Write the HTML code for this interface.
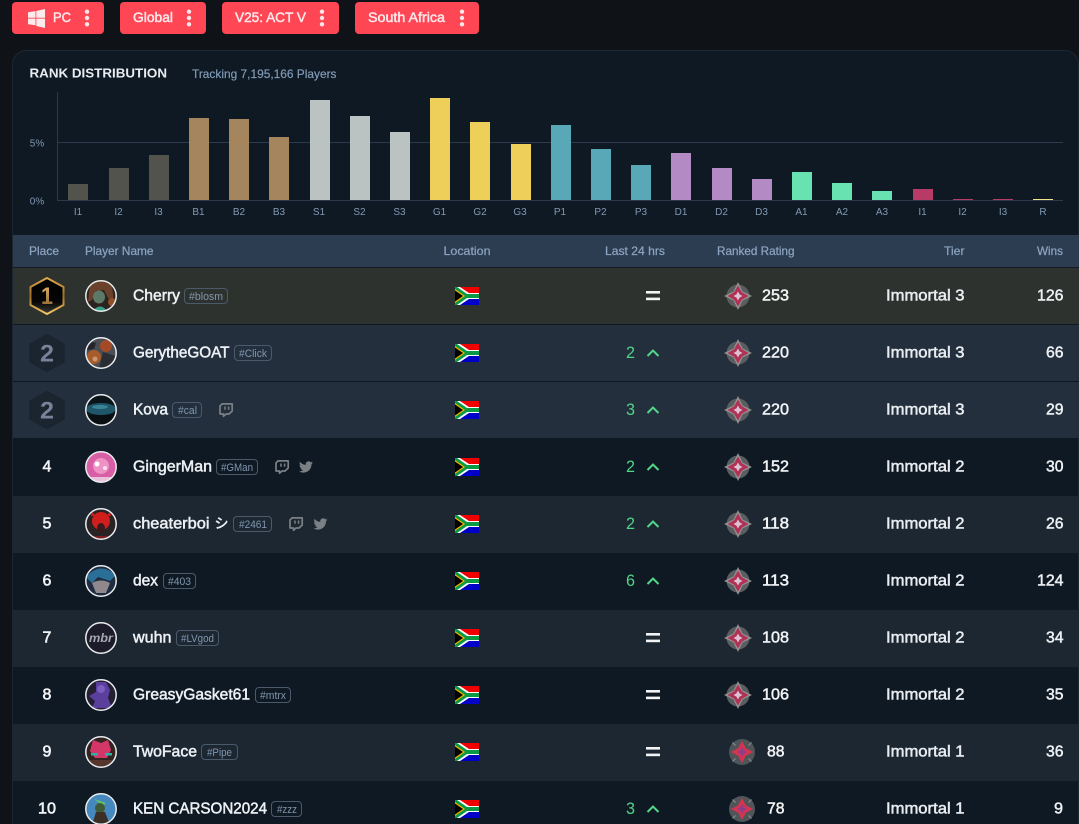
<!DOCTYPE html>
<html><head><meta charset="utf-8"><title>Rank Distribution</title>
<style>
html,body{margin:0;padding:0;background:#0f1318;overflow:hidden}
svg{display:block}
text{font-family:"Liberation Sans","Noto Sans CJK JP",sans-serif}
.btn{font-size:14px;fill:#fde6e8;stroke:#fde6e8;stroke-width:.5}
.ax{font-size:10px;fill:#8199b3;text-anchor:middle}
.hd{font-size:12px;fill:#8ba3be;stroke:#8ba3be;stroke-width:.25}
.nm{font-size:16px;fill:#edf1f5;stroke:#edf1f5;stroke-width:.5;transform:translateY(-.6px)}
.tg{font-size:11px;fill:#8096ae}
.tb{fill:none;stroke:#4b5a6b;stroke-width:1}
.pl{font-size:16px;fill:#f2f4f6;stroke:#f2f4f6;stroke-width:.6;text-anchor:middle;transform:translateY(-.6px)}
.rt{font-size:16px;fill:#f2f4f6;stroke:#f2f4f6;stroke-width:.5;transform:translateY(-.6px)}
.tr{font-size:16px;fill:#e9edf1;stroke:#e9edf1;stroke-width:.5;transform:translateY(-.6px)}
.wn{font-size:16px;fill:#edf0f3;stroke:#edf0f3;stroke-width:.5;transform:translateY(-.6px)}
.ch{font-size:17px;fill:#4fd586;transform:translateY(-.6px)}
</style></head><body>
<svg width="1079" height="824" viewBox="0 0 1079 824" xmlns="http://www.w3.org/2000/svg">
<defs>
<linearGradient id="gold" x1="0" y1="0" x2="0" y2="1"><stop offset="0" stop-color="#e0aa50"/><stop offset=".5" stop-color="#9a6c26"/><stop offset="1" stop-color="#f4c766"/></linearGradient>
<linearGradient id="gnum" x1="0" y1="0" x2="0" y2="1"><stop offset="0" stop-color="#edb868"/><stop offset="1" stop-color="#85602a"/></linearGradient>
<linearGradient id="hexf" x1="0" y1="0" x2="0" y2="1"><stop offset="0" stop-color="#000"/><stop offset=".66" stop-color="#060606"/><stop offset="1" stop-color="#3c3c38"/></linearGradient>
<clipPath id="c"><circle cx="101" cy="0" r="15"/></clipPath>
<g id="flag">
<rect x="455" y="-9" width="24" height="9" fill="#f00000"/>
<rect x="455" y="0" width="24" height="9" fill="#0000c8"/>
<path d="M455-9H460L469-3H479V3H469L460 9H455Z" fill="#fff"/>
<path d="M455-9H457L467-2H479V2H467L457 9H455Z" fill="#0a9a45"/>
<path d="M455-7L465 0 455 7Z" fill="#f5b400"/>
<path d="M455-5.500L463 0 455 5.500Z" fill="#000"/>
</g>
<g id="imm3">
<circle cx="738" cy="0" r="11.500" fill="#5a5e60"/>
<path d="M738-14L742.500-4.500 752 0 742.500 4.500 738 14 733.500 4.500 724 0 733.500-4.500Z" fill="#929391"/>
<path d="M738-10.500L741.800-3.800 748.500 0 741.800 3.800 738 10.500 734.200 3.800 727.500 0 734.200-3.800Z" fill="#b03056"/>
<path d="M738-4.500L739.600-1.600 742.500 0 739.600 1.600 738 4.500 736.400 1.600 733.500 0 736.400-1.600Z" fill="#dcc2d2"/>
</g>
<g id="imm1">
<circle cx="742" cy="0" r="13" fill="#4f5559"/>
<path d="M735.500-6.500l-3-3M748.500-6.500l3-3M735.500 6.500l-3 3M748.500 6.500l3 3" stroke="#8f9393" stroke-width="1"/>
<path d="M742-11L745.800-3.800 753 0 745.800 3.800 742 11 738.200 3.800 731 0 738.200-3.800Z" fill="#d6334f"/>
<path d="M742-5L743.800-1.800 747 0 743.800 1.800 742 5 740.200 1.800 737 0 740.200-1.800Z" fill="#8e3d8c"/>
</g>
<g id="up"><path d="M647.500 3l5.500-5.500 5.500 5.500" fill="none" stroke="#52d68a" stroke-width="2"/></g>
<g id="eq"><rect x="646" y="-5" width="14" height="2.600" fill="#f1f3f5"/><rect x="646" y="1.600" width="14" height="2.600" fill="#f1f3f5"/></g>
<g id="tw" fill="none" stroke="#7b8085" stroke-linejoin="round">
<path d="M3 .9H13.200V8L10 11H7L4.500 13.200V11H1V3Z" stroke-width="1.700"/>
<path d="M6 3.500V6.800M9.600 3.500V6.800" stroke-width="1.500"/>
</g>
<path id="tt" d="M23.953 4.57a10 10 0 01-2.825.775 4.958 4.958 0 002.163-2.723c-.951.555-2.005.959-3.127 1.184a4.92 4.92 0 00-8.384 4.482C7.69 8.095 4.067 6.13 1.64 3.162a4.822 4.822 0 00-.666 2.475c0 1.71.87 3.213 2.188 4.096a4.904 4.904 0 01-2.228-.616v.06a4.923 4.923 0 003.946 4.827 4.996 4.996 0 01-2.212.085 4.936 4.936 0 004.604 3.417 9.867 9.867 0 01-6.102 2.105c-.39 0-.779-.023-1.17-.067a13.995 13.995 0 007.557 2.209c9.053 0 13.998-7.496 13.998-13.985 0-.21 0-.42-.015-.63A9.935 9.935 0 0024 4.59z" fill="#7b8085"/>
<circle id="ring" cx="101" cy="0" r="15.200" fill="none" stroke="#e9ecee" stroke-width="1.500"/>
</defs>

<rect width="1079" height="824" fill="#0f1318"/>

<!-- filter buttons -->
<rect x="12" y="2" width="92" height="32" rx="4" fill="#ff4655"/>
<rect x="120" y="2" width="86" height="32" rx="4" fill="#ff4655"/>
<rect x="222" y="2" width="117" height="32" rx="4" fill="#ff4655"/>
<rect x="355" y="2" width="124" height="32" rx="4" fill="#ff4655"/>
<path d="M28 12.200l7.500-1.100v6.700H28zM36.300 11l8.700-2v8.800h-8.700zM28 18.600h7.500v6.700L28 24.200zM36.300 18.600H45V28l-8.700-2z" fill="#fdeaec"/>
<text class="btn" x="53" y="22" textLength="18" lengthAdjust="spacingAndGlyphs">PC</text>
<text class="btn" x="133" y="22" textLength="40" lengthAdjust="spacingAndGlyphs">Global</text>
<text class="btn" x="235" y="22" textLength="71" lengthAdjust="spacingAndGlyphs">V25: ACT V</text>
<text class="btn" x="368" y="22" textLength="77" lengthAdjust="spacingAndGlyphs">South Africa</text>
<g fill="#fde6e8">
<circle cx="87" cy="11.700" r="2.200"/><circle cx="87" cy="18" r="2.200"/><circle cx="87" cy="24.300" r="2.200"/>
<circle cx="189" cy="11.700" r="2.200"/><circle cx="189" cy="18" r="2.200"/><circle cx="189" cy="24.300" r="2.200"/>
<circle cx="322" cy="11.700" r="2.200"/><circle cx="322" cy="18" r="2.200"/><circle cx="322" cy="24.300" r="2.200"/>
<circle cx="462" cy="11.700" r="2.200"/><circle cx="462" cy="18" r="2.200"/><circle cx="462" cy="24.300" r="2.200"/>
</g>

<!-- card -->
<rect x="12.500" y="50.500" width="1066" height="800" rx="14" fill="#0f1923" stroke="#1c2733" stroke-width="1"/>
<text x="29.500" y="77.500" font-size="13" font-weight="700" fill="#e9edf1" textLength="137.500" lengthAdjust="spacingAndGlyphs">RANK DISTRIBUTION</text>
<text x="192" y="78" font-size="12" fill="#7f9ab6" stroke="#7f9ab6" stroke-width=".2" textLength="144.500" lengthAdjust="spacingAndGlyphs">Tracking 7,195,166 Players</text>

<!-- chart -->
<path d="M57.500 92V200.500H1063M57.500 142.500H1063" fill="none" stroke="#2b394a" stroke-width="1"/>
<text class="ax" x="37" y="146.500">5%</text>
<text class="ax" x="37" y="204.500">0%</text>
<g fill="#52534d">
<rect x="68" y="184" width="20" height="16"/><rect x="109" y="168" width="20" height="32"/><rect x="149" y="155" width="20" height="45"/>
</g>
<g fill="#a5855e">
<rect x="189" y="118" width="20" height="82"/><rect x="229" y="119" width="20" height="81"/><rect x="269" y="137" width="20" height="63"/>
</g>
<g fill="#bbc3c2">
<rect x="310" y="100" width="20" height="100"/><rect x="350" y="116" width="20" height="84"/><rect x="390" y="132" width="20" height="68"/>
</g>
<g fill="#edcf5a">
<rect x="430" y="98" width="20" height="102"/><rect x="470" y="122" width="20" height="78"/><rect x="511" y="144" width="20" height="56"/>
</g>
<g fill="#58a8b7">
<rect x="551" y="125" width="20" height="75"/><rect x="591" y="149" width="20" height="51"/><rect x="631" y="165" width="20" height="35"/>
</g>
<g fill="#b48ac4">
<rect x="671" y="153" width="20" height="47"/><rect x="712" y="168" width="20" height="32"/><rect x="752" y="179" width="20" height="21"/>
</g>
<g fill="#67e2b0">
<rect x="792" y="172" width="20" height="28"/><rect x="832" y="183" width="20" height="17"/><rect x="872" y="191" width="20" height="9"/>
</g>
<g fill="#b83a66">
<rect x="913" y="189" width="20" height="11"/><rect x="953" y="199" width="20" height="1"/><rect x="993" y="199" width="20" height="1"/>
</g>
<rect x="1033" y="199" width="20" height="1" fill="#f1e58a"/>
<g>
<text class="ax" x="78" y="215">I1</text><text class="ax" x="118.500" y="215">I2</text><text class="ax" x="158.500" y="215">I3</text>
<text class="ax" x="198.500" y="215">B1</text><text class="ax" x="239" y="215">B2</text><text class="ax" x="279" y="215">B3</text>
<text class="ax" x="319" y="215">S1</text><text class="ax" x="359.500" y="215">S2</text><text class="ax" x="399.500" y="215">S3</text>
<text class="ax" x="439.500" y="215">G1</text><text class="ax" x="480" y="215">G2</text><text class="ax" x="520" y="215">G3</text>
<text class="ax" x="560" y="215">P1</text><text class="ax" x="600.500" y="215">P2</text><text class="ax" x="641" y="215">P3</text>
<text class="ax" x="681" y="215">D1</text><text class="ax" x="721.500" y="215">D2</text><text class="ax" x="761.500" y="215">D3</text>
<text class="ax" x="801.500" y="215">A1</text><text class="ax" x="842" y="215">A2</text><text class="ax" x="882" y="215">A3</text>
<text class="ax" x="922.500" y="215">I1</text><text class="ax" x="962.500" y="215">I2</text><text class="ax" x="1003" y="215">I3</text>
<text class="ax" x="1043" y="215">R</text>
</g>

<!-- table header -->
<rect x="13" y="235" width="1066" height="32" fill="#2c3d52"/>
<text class="hd" x="29" y="255" textLength="30" lengthAdjust="spacingAndGlyphs">Place</text>
<text class="hd" x="85" y="255" textLength="68.500" lengthAdjust="spacingAndGlyphs">Player Name</text>
<text class="hd" x="443.500" y="255" textLength="47" lengthAdjust="spacingAndGlyphs">Location</text>
<text class="hd" x="605" y="255" textLength="60" lengthAdjust="spacingAndGlyphs">Last 24 hrs</text>
<text class="hd" x="717" y="255" textLength="77.500" lengthAdjust="spacingAndGlyphs">Ranked Rating</text>
<text class="hd" x="944" y="255" textLength="20.500" lengthAdjust="spacingAndGlyphs">Tier</text>
<text class="hd" x="1037" y="255" textLength="26" lengthAdjust="spacingAndGlyphs">Wins</text>

<!-- row backgrounds -->
<rect x="13" y="267" width="1066" height="1" fill="#141b23"/>
<rect x="13" y="268" width="1066" height="56" fill="#2e322e"/>
<rect x="13" y="324" width="1066" height="1" fill="#11171e"/>
<rect x="13" y="325" width="1066" height="56" fill="#232f3d"/>
<rect x="13" y="381" width="1066" height="1" fill="#11171e"/>
<rect x="13" y="382" width="1066" height="56" fill="#232f3d"/>
<rect x="13" y="496" width="1066" height="57" fill="#1c2732"/>
<rect x="13" y="610" width="1066" height="57" fill="#1c2732"/>
<rect x="13" y="724" width="1066" height="57" fill="#1c2732"/>

<!-- Row 1 -->
<g transform="translate(0,296)">
<path d="M47-18L63.500-9V9L47 18 30.500 9V-9z" fill="url(#hexf)" stroke="url(#gold)" stroke-width="2" stroke-linejoin="round"/>
<text x="47" y="8" font-size="24" font-weight="700" fill="url(#gnum)" text-anchor="middle" textLength="12" lengthAdjust="spacingAndGlyphs">1</text>
<g clip-path="url(#c)"><rect x="85" y="-16" width="32" height="32" fill="#2c2220"/><path d="M90-12Q101-20 112-10L114 6 108 2 104-6 96-5 92 4 88 6z" fill="#6a412b"/><ellipse cx="99" cy="1" rx="6" ry="6.500" fill="#5d7a68"/><path d="M92 16Q100 5 108 16z" fill="#37a088"/><circle cx="112" cy="6" r="4" fill="#8f5026"/></g>
<use href="#ring"/>
<text class="nm" x="133" y="5" textLength="47" lengthAdjust="spacingAndGlyphs">Cherry</text>
<rect class="tb" x="184.500" y="-7.500" width="43" height="15" rx="3.500"/>
<text class="tg" x="189" y="4" textLength="34" lengthAdjust="spacingAndGlyphs">#blosm</text>
<use href="#flag"/><use href="#eq"/><use href="#imm3"/>
<text class="rt" x="762" y="5" textLength="27" lengthAdjust="spacingAndGlyphs">253</text>
<text class="tr" x="886" y="5" textLength="78.500" lengthAdjust="spacingAndGlyphs">Immortal 3</text>
<text class="wn" x="1037" y="5" textLength="26.500" lengthAdjust="spacingAndGlyphs">126</text>
</g>

<!-- Row 2 -->
<g transform="translate(0,353)">
<path d="M47-18.500L64-9V9L47 18.500 30 9V-9z" fill="#1a2530" stroke="#1a2530" stroke-width="1.500" stroke-linejoin="round"/>
<text x="47" y="8.700" font-size="24" font-weight="700" fill="#7a8199" text-anchor="middle" textLength="14" lengthAdjust="spacingAndGlyphs">2</text>
<g clip-path="url(#c)"><rect x="85" y="-16" width="32" height="32" fill="#4a4d54"/><circle cx="106" cy="-7" r="6" fill="#a34a28"/><circle cx="94" cy="4" r="7" fill="#a85c2c"/><path d="M103-1l12 4v13H99z" fill="#2b2d34"/><path d="M88-12l8 2-2 6-7 1z" fill="#24262c"/><circle cx="95" cy="6" r="2.500" fill="#c9986f"/></g>
<use href="#ring"/>
<text class="nm" x="133" y="5" textLength="96.500" lengthAdjust="spacingAndGlyphs">GerytheGOAT</text>
<rect class="tb" x="234.500" y="-7.500" width="37" height="15" rx="3.500"/>
<text class="tg" x="239" y="4" textLength="28" lengthAdjust="spacingAndGlyphs">#Click</text>
<use href="#flag"/>
<text class="ch" x="626" y="5.500" textLength="9" lengthAdjust="spacingAndGlyphs">2</text><use href="#up"/>
<use href="#imm3"/>
<text class="rt" x="762" y="5" textLength="27" lengthAdjust="spacingAndGlyphs">220</text>
<text class="tr" x="886" y="5" textLength="78.500" lengthAdjust="spacingAndGlyphs">Immortal 3</text>
<text class="wn" x="1046" y="5" textLength="17.500" lengthAdjust="spacingAndGlyphs">66</text>
</g>

<!-- Row 3 -->
<g transform="translate(0,410)">
<path d="M47-18.500L64-9V9L47 18.500 30 9V-9z" fill="#1a2530" stroke="#1a2530" stroke-width="1.500" stroke-linejoin="round"/>
<text x="47" y="8.700" font-size="24" font-weight="700" fill="#7a8199" text-anchor="middle" textLength="14" lengthAdjust="spacingAndGlyphs">2</text>
<g clip-path="url(#c)"><rect x="85" y="-16" width="32" height="32" fill="#0b1418"/><ellipse cx="101" cy="-1" rx="15" ry="6" fill="#1f5669"/><ellipse cx="100" cy="-3" rx="8" ry="2" fill="#3a8498"/><rect x="85" y="5" width="32" height="11" fill="#0a1012"/></g>
<use href="#ring"/>
<text class="nm" x="133" y="5" textLength="35" lengthAdjust="spacingAndGlyphs">Kova</text>
<rect class="tb" x="172.500" y="-7.500" width="29" height="15" rx="3.500"/>
<text class="tg" x="178" y="4" textLength="19" lengthAdjust="spacingAndGlyphs">#cal</text>
<use href="#tw" transform="translate(219,-7)"/>
<use href="#flag"/>
<text class="ch" x="626" y="5.500" textLength="9" lengthAdjust="spacingAndGlyphs">3</text><use href="#up"/>
<use href="#imm3"/>
<text class="rt" x="762" y="5" textLength="27" lengthAdjust="spacingAndGlyphs">220</text>
<text class="tr" x="886" y="5" textLength="78.500" lengthAdjust="spacingAndGlyphs">Immortal 3</text>
<text class="wn" x="1046" y="5" textLength="17.500" lengthAdjust="spacingAndGlyphs">29</text>
</g>

<!-- Row 4 -->
<g transform="translate(0,467)">
<text class="pl" x="47" y="5">4</text>
<g clip-path="url(#c)"><rect x="85" y="-16" width="32" height="32" fill="#d85fa5"/><circle cx="101" cy="-1" r="8" fill="#ee92c6"/><circle cx="97" cy="-3" r="2.500" fill="#fff"/><circle cx="105" cy="1" r="2" fill="#fde"/><path d="M85 10h32v6H85z" fill="#e8c2da"/></g>
<use href="#ring"/>
<text class="nm" x="133" y="5" textLength="79" lengthAdjust="spacingAndGlyphs">GingerMan</text>
<rect class="tb" x="216.500" y="-7.500" width="41" height="15" rx="3.500"/>
<text class="tg" x="221" y="4" textLength="32" lengthAdjust="spacingAndGlyphs">#GMan</text>
<use href="#tw" transform="translate(275,-7)"/>
<use href="#tt" transform="translate(299,-7) scale(.58)"/>
<use href="#flag"/>
<text class="ch" x="626" y="5.500" textLength="9" lengthAdjust="spacingAndGlyphs">2</text><use href="#up"/>
<use href="#imm3"/>
<text class="rt" x="762" y="5" textLength="27" lengthAdjust="spacingAndGlyphs">152</text>
<text class="tr" x="886" y="5" textLength="78.500" lengthAdjust="spacingAndGlyphs">Immortal 2</text>
<text class="wn" x="1046" y="5" textLength="17.500" lengthAdjust="spacingAndGlyphs">30</text>
</g>

<!-- Row 5 -->
<g transform="translate(0,524)">
<text class="pl" x="47" y="5">5</text>
<g clip-path="url(#c)"><rect x="85" y="-16" width="32" height="32" fill="#2a2326"/><circle cx="101" cy="-3" r="9" fill="#d01e1d"/><path d="M92-12l4 4h-5zM110-12l-4 4h5z" fill="#d01e1d"/><ellipse cx="101" cy="4" rx="4" ry="5" fill="#3a1a1c"/><path d="M89 12h24v4H89z" fill="#7a1e20"/></g>
<use href="#ring"/>
<text class="nm" x="133" y="5" textLength="76.500" lengthAdjust="spacingAndGlyphs">cheaterboi</text>
<text class="nm" x="214.500" y="5" style="font-size:14px" textLength="14" lengthAdjust="spacingAndGlyphs">シ</text>
<rect class="tb" x="233.500" y="-7.500" width="38" height="15" rx="3.500"/>
<text class="tg" x="239" y="4" textLength="28" lengthAdjust="spacingAndGlyphs">#2461</text>
<use href="#tw" transform="translate(289,-7)"/>
<use href="#tt" transform="translate(313.500,-7) scale(.58)"/>
<use href="#flag"/>
<text class="ch" x="626" y="5.500" textLength="9" lengthAdjust="spacingAndGlyphs">2</text><use href="#up"/>
<use href="#imm3"/>
<text class="rt" x="762" y="5" textLength="27" lengthAdjust="spacingAndGlyphs">118</text>
<text class="tr" x="886" y="5" textLength="78.500" lengthAdjust="spacingAndGlyphs">Immortal 2</text>
<text class="wn" x="1046" y="5" textLength="17.500" lengthAdjust="spacingAndGlyphs">26</text>
</g>

<!-- Row 6 -->
<g transform="translate(0,581)">
<text class="pl" x="47" y="5">6</text>
<g clip-path="url(#c)"><rect x="85" y="-16" width="32" height="32" fill="#1f2c40"/><path d="M86-4Q100-20 116-6L110 0 98-4 92 2z" fill="#2a6f98"/><path d="M92 2Q101-3 110 2L106 12 96 12z" fill="#8f888d"/><path d="M85 8l10 8H85zM117 8l-10 8h10z" fill="#1e2a3c"/></g>
<use href="#ring"/>
<text class="nm" x="133" y="5" textLength="25" lengthAdjust="spacingAndGlyphs">dex</text>
<rect class="tb" x="163.500" y="-7.500" width="32" height="15" rx="3.500"/>
<text class="tg" x="168" y="4" textLength="23" lengthAdjust="spacingAndGlyphs">#403</text>
<use href="#flag"/>
<text class="ch" x="626" y="5.500" textLength="9" lengthAdjust="spacingAndGlyphs">6</text><use href="#up"/>
<use href="#imm3"/>
<text class="rt" x="762" y="5" textLength="27" lengthAdjust="spacingAndGlyphs">113</text>
<text class="tr" x="886" y="5" textLength="78.500" lengthAdjust="spacingAndGlyphs">Immortal 2</text>
<text class="wn" x="1037" y="5" textLength="26.500" lengthAdjust="spacingAndGlyphs">124</text>
</g>

<!-- Row 7 -->
<g transform="translate(0,638)">
<text class="pl" x="47" y="5">7</text>
<g clip-path="url(#c)"><rect x="85" y="-16" width="32" height="32" fill="#1c1b29"/><text x="101" y="4" font-size="12" font-weight="700" font-style="italic" fill="#a6a7b0" text-anchor="middle" textLength="24" lengthAdjust="spacingAndGlyphs">mbr</text></g>
<use href="#ring"/>
<text class="nm" x="133" y="5" textLength="38.500" lengthAdjust="spacingAndGlyphs">wuhn</text>
<rect class="tb" x="176.500" y="-7.500" width="42" height="15" rx="3.500"/>
<text class="tg" x="181" y="4" textLength="33" lengthAdjust="spacingAndGlyphs">#LVgod</text>
<use href="#flag"/><use href="#eq"/><use href="#imm3"/>
<text class="rt" x="762" y="5" textLength="27" lengthAdjust="spacingAndGlyphs">108</text>
<text class="tr" x="886" y="5" textLength="78.500" lengthAdjust="spacingAndGlyphs">Immortal 2</text>
<text class="wn" x="1046" y="5" textLength="17.500" lengthAdjust="spacingAndGlyphs">34</text>
</g>

<!-- Row 8 -->
<g transform="translate(0,695)">
<text class="pl" x="47" y="5">8</text>
<g clip-path="url(#c)"><rect x="85" y="-16" width="32" height="32" fill="#241f33"/><path d="M96-13h10l4 8-2 8 4 10H92l3-7-6-5 7-4z" fill="#5a3f9c"/><circle cx="101" cy="-6" r="4" fill="#7a5ec0"/></g>
<use href="#ring"/>
<text class="nm" x="133" y="5" textLength="117" lengthAdjust="spacingAndGlyphs">GreasyGasket61</text>
<rect class="tb" x="255.500" y="-7.500" width="35" height="15" rx="3.500"/>
<text class="tg" x="260" y="4" textLength="26" lengthAdjust="spacingAndGlyphs">#mtrx</text>
<use href="#flag"/><use href="#eq"/><use href="#imm3"/>
<text class="rt" x="762" y="5" textLength="27" lengthAdjust="spacingAndGlyphs">106</text>
<text class="tr" x="886" y="5" textLength="78.500" lengthAdjust="spacingAndGlyphs">Immortal 2</text>
<text class="wn" x="1046" y="5" textLength="17.500" lengthAdjust="spacingAndGlyphs">35</text>
</g>

<!-- Row 9 -->
<g transform="translate(0,752)">
<text class="pl" x="47" y="5">9</text>
<g clip-path="url(#c)"><rect x="85" y="-16" width="32" height="32" fill="#33241f"/><path d="M93-12l8 3 7-3 3 10-4 8H95l-5-7z" fill="#d5366a"/><path d="M91 1h7v2.500h-7zM105 1h7v2.500h-7z" fill="#2bb2a8"/><path d="M90 8h22v8H90z" fill="#55352c"/></g>
<use href="#ring"/>
<text class="nm" x="133" y="5" textLength="64" lengthAdjust="spacingAndGlyphs">TwoFace</text>
<rect class="tb" x="201.500" y="-7.500" width="36" height="15" rx="3.500"/>
<text class="tg" x="207" y="4" textLength="25" lengthAdjust="spacingAndGlyphs">#Pipe</text>
<use href="#flag"/><use href="#eq"/><use href="#imm1"/>
<text class="rt" x="767" y="5" textLength="17.500" lengthAdjust="spacingAndGlyphs">88</text>
<text class="tr" x="886" y="5" textLength="78.500" lengthAdjust="spacingAndGlyphs">Immortal 1</text>
<text class="wn" x="1046" y="5" textLength="17.500" lengthAdjust="spacingAndGlyphs">36</text>
</g>

<!-- Row 10 -->
<g transform="translate(0,809)">
<text class="pl" x="47" y="5" textLength="18" lengthAdjust="spacingAndGlyphs">10</text>
<g clip-path="url(#c)"><rect x="85" y="-16" width="32" height="32" fill="#4488bd"/><path d="M94-10l12 4-3 3z" fill="#5ec468"/><circle cx="100" cy="-1" r="5" fill="#3e5a36"/><path d="M92 16l4-13h9l5 13z" fill="#3a3028"/></g>
<use href="#ring"/>
<text class="nm" x="133" y="5" textLength="134" lengthAdjust="spacingAndGlyphs">KEN CARSON2024</text>
<rect class="tb" x="271.500" y="-7.500" width="30" height="15" rx="3.500"/>
<text class="tg" x="277" y="4" textLength="20" lengthAdjust="spacingAndGlyphs">#zzz</text>
<use href="#flag"/>
<text class="ch" x="626" y="5.500" textLength="9" lengthAdjust="spacingAndGlyphs">3</text><use href="#up"/>
<use href="#imm1"/>
<text class="rt" x="767" y="5" textLength="17.500" lengthAdjust="spacingAndGlyphs">78</text>
<text class="tr" x="886" y="5" textLength="78.500" lengthAdjust="spacingAndGlyphs">Immortal 1</text>
<text class="wn" x="1054" y="5" textLength="9" lengthAdjust="spacingAndGlyphs">9</text>
</g>
</svg>
</body></html>
